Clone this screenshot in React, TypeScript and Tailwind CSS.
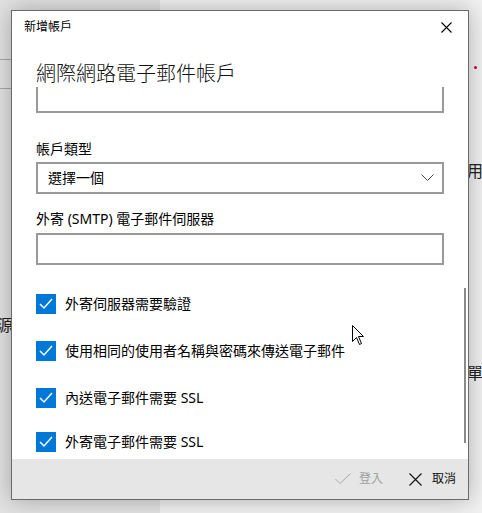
import React from "react"

const font = { fontFamily: '"Noto Sans", "Noto Sans CJK TC", sans-serif' }

const CheckRow = ({ label, className }: { label: string; className: string }) => (
    <div className={`flex items-center h-[20px] ${className}`}>
        <div className="w-[20px] h-[20px] bg-[#0078d7] flex items-center justify-center shrink-0">
            <svg width="20" height="20" viewBox="0 0 20 20">
                <polyline points="4,10 8,14 16,5" fill="none" stroke="#fff" strokeWidth="1.5" />
            </svg>
        </div>
        <span className="ml-[9px] text-[14px] leading-[20px] text-black">{label}</span>
    </div>
)

const App = () => {
    return (
        <div className="relative w-[482px] h-[513px] overflow-hidden flex" style={font}>
            {/* background page */}
            <div className="w-[160px] h-full bg-[#e2e2e2]">
                <div className="h-[60px] border-b border-[#a8a8a8]" />
                <div className="h-[29px] border-b border-[#a8a8a8]" />
            </div>
            <div className="flex-1 h-full bg-[#f1f1f1]" />

            <span className="absolute left-[467px] top-[161px] text-[16px] leading-[20px] text-[#222]">用</span>
            <span className="absolute left-[-3px] top-[315px] text-[16px] leading-[20px] text-[#222]">源</span>
            <span className="absolute left-[467px] top-[363px] whitespace-nowrap text-[16px] leading-[20px] text-[#222]">單址</span>
            <span className="absolute left-[474px] top-[66px] w-[3px] h-[3px] rounded-full bg-[#d0003a]" />

            {/* dialog */}
            <div className="absolute left-[11px] top-[10px] w-[458px] h-[490px] bg-white border border-[#6a6a6a] shadow-[0_0_22px_rgba(0,0,0,0.28)] flex flex-col">
                <div className="h-[32px] flex items-center justify-between pl-[12px] pr-[16px]">
                    <span className="text-[12px] text-black">新增帳戶</span>
                    <svg width="11" height="11" viewBox="0 0 11 11">
                        <path d="M0.5 0.5 L10.5 10.5 M10.5 0.5 L0.5 10.5" stroke="#000" strokeWidth="1.1" />
                    </svg>
                </div>
                <div className="h-[44px] pt-[18px] px-[24px]">
                    <div className="text-[20px] leading-[26px] font-light text-[#111]">網際網路電子郵件帳戶</div>
                </div>

                <div className="relative h-[372px] overflow-hidden">
                    <div className="px-[24px] mt-[-6px] flex flex-col">
                        <div className="h-[32px] border-2 border-[#999]" />
                        <div className="mt-[26px] text-[14px] leading-[20px] text-black">帳戶類型</div>
                        <div className="mt-[3px] h-[32px] border-2 border-[#999] flex items-center justify-between pl-[10px] pr-[8px]">
                            <span className="text-[14px] leading-[20px] text-black">選擇一個</span>
                            <svg width="13" height="8" viewBox="0 0 13 8">
                                <polyline points="0.5,0.5 6.5,6.5 12.5,0.5" fill="none" stroke="#444" strokeWidth="1" />
                            </svg>
                        </div>
                        <div className="mt-[15px] text-[14px] leading-[20px] text-black">外寄 (SMTP) 電子郵件伺服器</div>
                        <div className="mt-[4px] h-[32px] border-2 border-[#999]" />
                        <CheckRow className="mt-[29px]" label="外寄伺服器需要驗證" />
                        <CheckRow className="mt-[27px]" label="使用相同的使用者名稱與密碼來傳送電子郵件" />
                        <CheckRow className="mt-[27px]" label="內送電子郵件需要 SSL" />
                        <CheckRow className="mt-[24px]" label="外寄電子郵件需要 SSL" />
                    </div>
                    <div className="absolute right-[2px] top-[201px] w-[2px] h-[155px] bg-[#8a8a8a]" />
                </div>

                <div className="h-[40px] bg-[#e6e6e6] flex items-center justify-end pr-[12px]">
                    <div className="flex items-center">
                        <svg width="16" height="12" viewBox="0 0 16 12">
                            <polyline points="0.5,6 5,10.5 15.5,0.5" fill="none" stroke="#a6a6a6" strokeWidth="1" />
                        </svg>
                        <span className="ml-[8px] text-[12px] text-[#a0a0a0]">登入</span>
                    </div>
                    <div className="flex items-center ml-[26px]">
                        <svg width="13" height="13" viewBox="0 0 13 13">
                            <path d="M0.5 0.5 L12.5 12.5 M12.5 0.5 L0.5 12.5" stroke="#111" strokeWidth="1.1" />
                        </svg>
                        <span className="ml-[10px] text-[12px] text-[#111]">取消</span>
                    </div>
                </div>
            </div>

            {/* mouse cursor */}
            <svg className="absolute left-[352px] top-[325px]" width="13" height="21" viewBox="0 0 13 21">
                <path d="M0.5 0.5 L0.5 16.5 L4.5 12.5 L7.5 19.5 L9.5 18.5 L6.5 11.5 L11.5 11.5 Z" fill="#fff" stroke="#000" strokeWidth="1" />
            </svg>
        </div>
    )
}
export default App
